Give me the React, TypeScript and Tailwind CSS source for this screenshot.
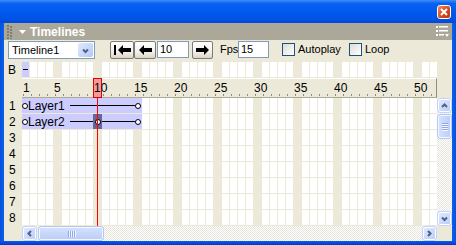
import React from 'react'

const FRAMES = Array.from({ length: 52 }, (_, i) => i + 1)
const ROWS = [3, 4, 5, 6, 7, 8]
const LABELS = [5, 10, 15, 20, 25, 30, 35, 40, 45, 50]

function Cell({ n, line }: { n: number; line?: boolean }) {
  if (n % 5 === 0) return <div className="w-[8px] h-full shrink-0 bg-[#ECE9D8]" />
  return line ? (
    <div className="w-[8px] h-full shrink-0 bg-white border-r border-b border-[#ECE9D8]" />
  ) : (
    <div className="w-[8px] h-full shrink-0 bg-white border-r border-[#ECE9D8]" />
  )
}

function Dot() {
  return <div className="w-[6px] h-[6px] shrink-0 rounded-full border border-black bg-white" />
}

function ArrowLeft() {
  return (
    <svg width="13" height="10" viewBox="0 0 13 10">
      <polygon points="0,5 5,0 5,3 13,3 13,7 5,7 5,10" fill="#000" />
    </svg>
  )
}

function ArrowRight() {
  return (
    <svg width="13" height="10" viewBox="0 0 13 10">
      <polygon points="13,5 8,0 8,3 0,3 0,7 8,7 8,10" fill="#000" />
    </svg>
  )
}

function ArrowFirst() {
  return (
    <svg width="17" height="10" viewBox="0 0 17 10">
      <rect x="0" y="0" width="2" height="10" fill="#000" />
      <polygon points="4,5 9,0 9,3 17,3 17,7 9,7 9,10" fill="#000" />
    </svg>
  )
}

function Chevron({ dir }: { dir: 'up' | 'down' | 'left' | 'right' }) {
  const d =
    dir === 'up' ? 'M2 6 L4.5 3.5 L7 6' : dir === 'down' ? 'M2 3.5 L4.5 6 L7 3.5' : dir === 'left' ? 'M6 2 L3.5 4.5 L6 7' : 'M3 2 L5.5 4.5 L3 7'
  return (
    <svg width="9" height="9" viewBox="0 0 9 9">
      <path d={d} fill="none" stroke="#4D6185" strokeWidth="2" />
    </svg>
  )
}

function ScrollButton({ dir }: { dir: 'up' | 'down' | 'left' | 'right' }) {
  return (
    <div className="w-[15px] h-[15px] shrink-0 flex items-center justify-center rounded-[3px] border border-[#C3D3FD] bg-[linear-gradient(135deg,#E3EBFF,#B8CBF7)] shadow-[inset_0_0_0_1px_#FFFFFF]">
      <Chevron dir={dir} />
    </div>
  )
}

function ToolButton({ w, children }: { w: string; children: React.ReactNode }) {
  return (
    <div className={`${w} h-[18px] shrink-0 flex items-center justify-center rounded-[2px] border border-[#7C7B78] bg-[linear-gradient(180deg,#FFFFFF,#F2F1EB_60%,#D9D5C6)]`}>
      {children}
    </div>
  )
}

function Checkbox() {
  return <div className="w-[13px] h-[13px] shrink-0 border border-[#1C5180] bg-[linear-gradient(135deg,#DCDCD7,#FFFFFF)]" />
}

const track = 'bg-[repeating-conic-gradient(#FFFFFF_0_25%,#E8E6DC_0_50%)] bg-[length:2px_2px]'

export default function App() {
  return (
    <div className="w-[456px] h-[245px] flex flex-col bg-[#0553E3] font-['Liberation_Sans',Arial,sans-serif] text-black select-none overflow-hidden">
      {/* title bar */}
      <div className="h-[23px] shrink-0 flex justify-end items-start pt-[5px] pr-[5px] bg-[linear-gradient(180deg,#3D8FFC_0%,#0A62EE_15%,#0058EE_55%,#0052E2_85%,#0048D8_100%)]">
        <div className="w-[14px] h-[14px] rounded-[3px] border border-white bg-[linear-gradient(135deg,#EE8B65,#D54A1E_55%,#B83511)] flex items-center justify-center">
          <svg width="8" height="8" viewBox="0 0 8 8">
            <path d="M1 1 L7 7 M7 1 L1 7" stroke="#fff" strokeWidth="1.8" />
          </svg>
        </div>
      </div>

      <div className="flex flex-1 min-h-0">
        <div className="w-[4px] shrink-0 bg-[linear-gradient(90deg,#0A4FD8,#0862EE)]" />
        <div className="w-[448px] flex flex-col bg-[#ECE9D8]">
          {/* panel header */}
          <div className="h-[17px] shrink-0 flex items-center bg-[#ACA899]">
            <svg width="5" height="14" viewBox="0 0 5 14" className="ml-[3px]">
              {[0, 3, 6, 9, 12].map((y) => (
                <g key={y}>
                  <rect x="0" y={y} width="2" height="2" fill="#807C6C" />
                  <rect x="3" y={y + 1} width="2" height="2" fill="#807C6C" />
                </g>
              ))}
            </svg>
            <svg width="7" height="4" viewBox="0 0 7 4" className="ml-[7px]">
              <polygon points="0,0 7,0 3.5,4" fill="#fff" />
            </svg>
            <span className="ml-[4px] text-[12px] font-bold text-white leading-none">Timelines</span>
            <svg width="13" height="11" viewBox="0 0 13 11" className="ml-auto mr-[3px]">
              <rect x="0" y="0" width="2" height="2" fill="#fff" />
              <rect x="3" y="0" width="9" height="1.5" fill="#fff" />
              <rect x="0" y="4" width="2" height="2" fill="#fff" />
              <rect x="3" y="4" width="9" height="1.5" fill="#fff" />
              <rect x="0" y="8" width="2" height="2" fill="#fff" />
              <rect x="3" y="8" width="5" height="1.5" fill="#fff" />
              <polygon points="9,8 13,8 11,11" fill="#fff" />
            </svg>
          </div>

          {/* toolbar */}
          <div className="h-[21px] shrink-0 flex items-start pt-[1px] pl-[4px] text-[11px]">
            <div className="w-[87px] h-[18px] shrink-0 flex items-center border border-[#7F9DB9] bg-white">
              <span className="pl-[3px] flex-1">Timeline1</span>
              <div className="w-[15px] h-[14px] mr-[1px] flex items-center justify-center rounded-[2px] bg-[linear-gradient(135deg,#E0E9FE,#B4C8F6)]">
                <Chevron dir="down" />
              </div>
            </div>
            <div className="ml-[15px] flex">
              <ToolButton w="w-[24px]">
                <ArrowFirst />
              </ToolButton>
              <ToolButton w="w-[22px]">
                <ArrowLeft />
              </ToolButton>
            </div>
            <div className="ml-[1px] w-[32px] h-[17px] shrink-0 flex items-center border border-[#7F9DB9] bg-white pl-[2px]">10</div>
            <div className="ml-[3px]">
              <ToolButton w="w-[21px]">
                <ArrowRight />
              </ToolButton>
            </div>
            <span className="ml-[7px] w-[18px] h-[17px] flex items-center">Fps</span>
            <div className="w-[31px] h-[17px] shrink-0 flex items-center border border-[#7F9DB9] bg-white pl-[2px]">15</div>
            <div className="ml-[13px] h-[17px] flex items-center">
              <Checkbox />
            </div>
            <span className="ml-[3px] w-[51px] h-[17px] flex items-center">Autoplay</span>
            <div className="h-[17px] flex items-center">
              <Checkbox />
            </div>
            <span className="ml-[3px] h-[17px] flex items-center">Loop</span>
          </div>

          {/* timeline */}
          <div className="flex flex-1 min-h-0">
            {/* row labels */}
            <div className="w-[18px] shrink-0 flex flex-col text-[12px]">
              <div className="h-[17px] flex items-center pl-[4px]">B</div>
              <div className="h-[20px]" />
              {[1, 2, ...ROWS].map((r) => (
                <div key={r} className="h-[16px] flex items-center pl-[5px]">
                  {r}
                </div>
              ))}
            </div>

            {/* frames */}
            <div className="w-[415px] shrink-0 flex flex-col relative overflow-hidden">
              <div className="h-[17px] py-[1px] shrink-0">
                <div className="flex h-full">
                  <div className="w-[8px] h-full shrink-0 bg-[#CCCCFF] border-r border-[#ECE9D8] flex items-center pl-[1px]">
                    <div className="w-[5px] h-[1px] bg-black" />
                  </div>
                  {FRAMES.slice(1).map((n) => (
                    <Cell key={n} n={n} />
                  ))}
                </div>
              </div>

              {/* ruler */}
              <div className="h-[20px] shrink-0 flex flex-col border-t border-white border-b border-b-[#ACA899] border-r border-r-[#8E8B7F]">
                <div className="relative z-[1] flex flex-1 items-center text-[12px] leading-none pt-[2px]">
                  <div className="w-[32px] shrink-0 pl-[1px]">1</div>
                  {LABELS.map((n) => (
                    <div key={n} className="w-[40px] shrink-0">
                      {n}
                    </div>
                  ))}
                </div>
                <div className="flex h-[3px] shrink-0">
                  {FRAMES.map((n) => (
                    <div key={n} className="w-[8px] shrink-0">
                      <div className="ml-[1px] w-[1px] h-[2px] bg-[#8E8B7F]" />
                    </div>
                  ))}
                </div>
              </div>

              {/* layer rows */}
              <div className="flex h-[16px] shrink-0">
                <div className="w-[120px] h-full shrink-0 bg-[#CCCCFF] border-b border-[#ECE9D8] flex items-center text-[12px] leading-none">
                  <Dot />
                  <span>Layer1</span>
                  <div className="ml-[5px] flex-1 h-[1px] bg-black" />
                  <Dot />
                  <div className="w-[1px]" />
                </div>
                {FRAMES.slice(15).map((n) => (
                  <Cell key={n} n={n} line />
                ))}
              </div>
              <div className="flex h-[16px] shrink-0">
                <div className="w-[120px] h-full shrink-0 bg-[#CCCCFF] border-b border-[#ECE9D8] flex items-center text-[12px] leading-none">
                  <div className="w-[71px] flex items-center">
                    <Dot />
                    <span>Layer2</span>
                    <div className="ml-[5px] flex-1 h-[1px] bg-black" />
                  </div>
                  <div className="w-[9px] h-full flex items-center justify-center bg-[#666699]">
                    <Dot />
                  </div>
                  <div className="flex-1 h-[1px] bg-black" />
                  <Dot />
                  <div className="w-[1px]" />
                </div>
                {FRAMES.slice(15).map((n) => (
                  <Cell key={n} n={n} line />
                ))}
              </div>
              {ROWS.map((r) => (
                <div key={r} className="flex h-[16px] shrink-0">
                  {FRAMES.map((n) => (
                    <Cell key={n} n={n} line />
                  ))}
                </div>
              ))}

              {/* horizontal scrollbar */}
              <div className={`h-[15px] shrink-0 flex ${track}`}>
                <ScrollButton dir="left" />
                <div className="ml-[1px] w-[66px] h-full rounded-[3px] border border-[#B5C8F3] bg-[linear-gradient(180deg,#D6E2FE,#BACDF8)] shadow-[inset_0_0_0_1px_#F4F7FF] flex items-center justify-center gap-[1px]">
                  {[0, 1, 2, 3].map((i) => (
                    <div key={i} className="w-[1px] h-[6px] bg-[#8EA8EA] shadow-[1px_0_0_#F4F7FF]" />
                  ))}
                </div>
                <div className="flex-1" />
                <ScrollButton dir="right" />
              </div>

              {/* playhead */}
              <div className="absolute left-[71px] top-[17px] w-[9px] h-[20px] bg-[#F59A9A] border border-[#E00000]" />
              <div className="absolute left-[75px] top-[37px] w-[1px] h-[128px] bg-[#FF0000]" />
            </div>

            {/* vertical scrollbar */}
            <div className="w-[15px] shrink-0 flex flex-col">
              <div className="h-[37px]" />
              <div className={`h-[128px] flex flex-col ${track}`}>
                <ScrollButton dir="up" />
                <div className="mt-[1px] h-[25px] rounded-[3px] border border-[#B5C8F3] bg-[linear-gradient(90deg,#D6E2FE,#BACDF8)] shadow-[inset_0_0_0_1px_#F4F7FF] flex flex-col items-center justify-center gap-[1px]">
                  {[0, 1, 2, 3].map((i) => (
                    <div key={i} className="w-[6px] h-[1px] bg-[#8EA8EA] shadow-[0_1px_0_#F4F7FF]" />
                  ))}
                </div>
                <div className="flex-1" />
                <ScrollButton dir="down" />
              </div>
            </div>
          </div>
        </div>
        <div className="w-[4px] shrink-0 bg-[linear-gradient(90deg,#0862EE,#0A4FD8)]" />
      </div>
      <div className="h-[4px] shrink-0 bg-[linear-gradient(180deg,#0A5BEA,#0535C8)]" />
    </div>
  )
}
